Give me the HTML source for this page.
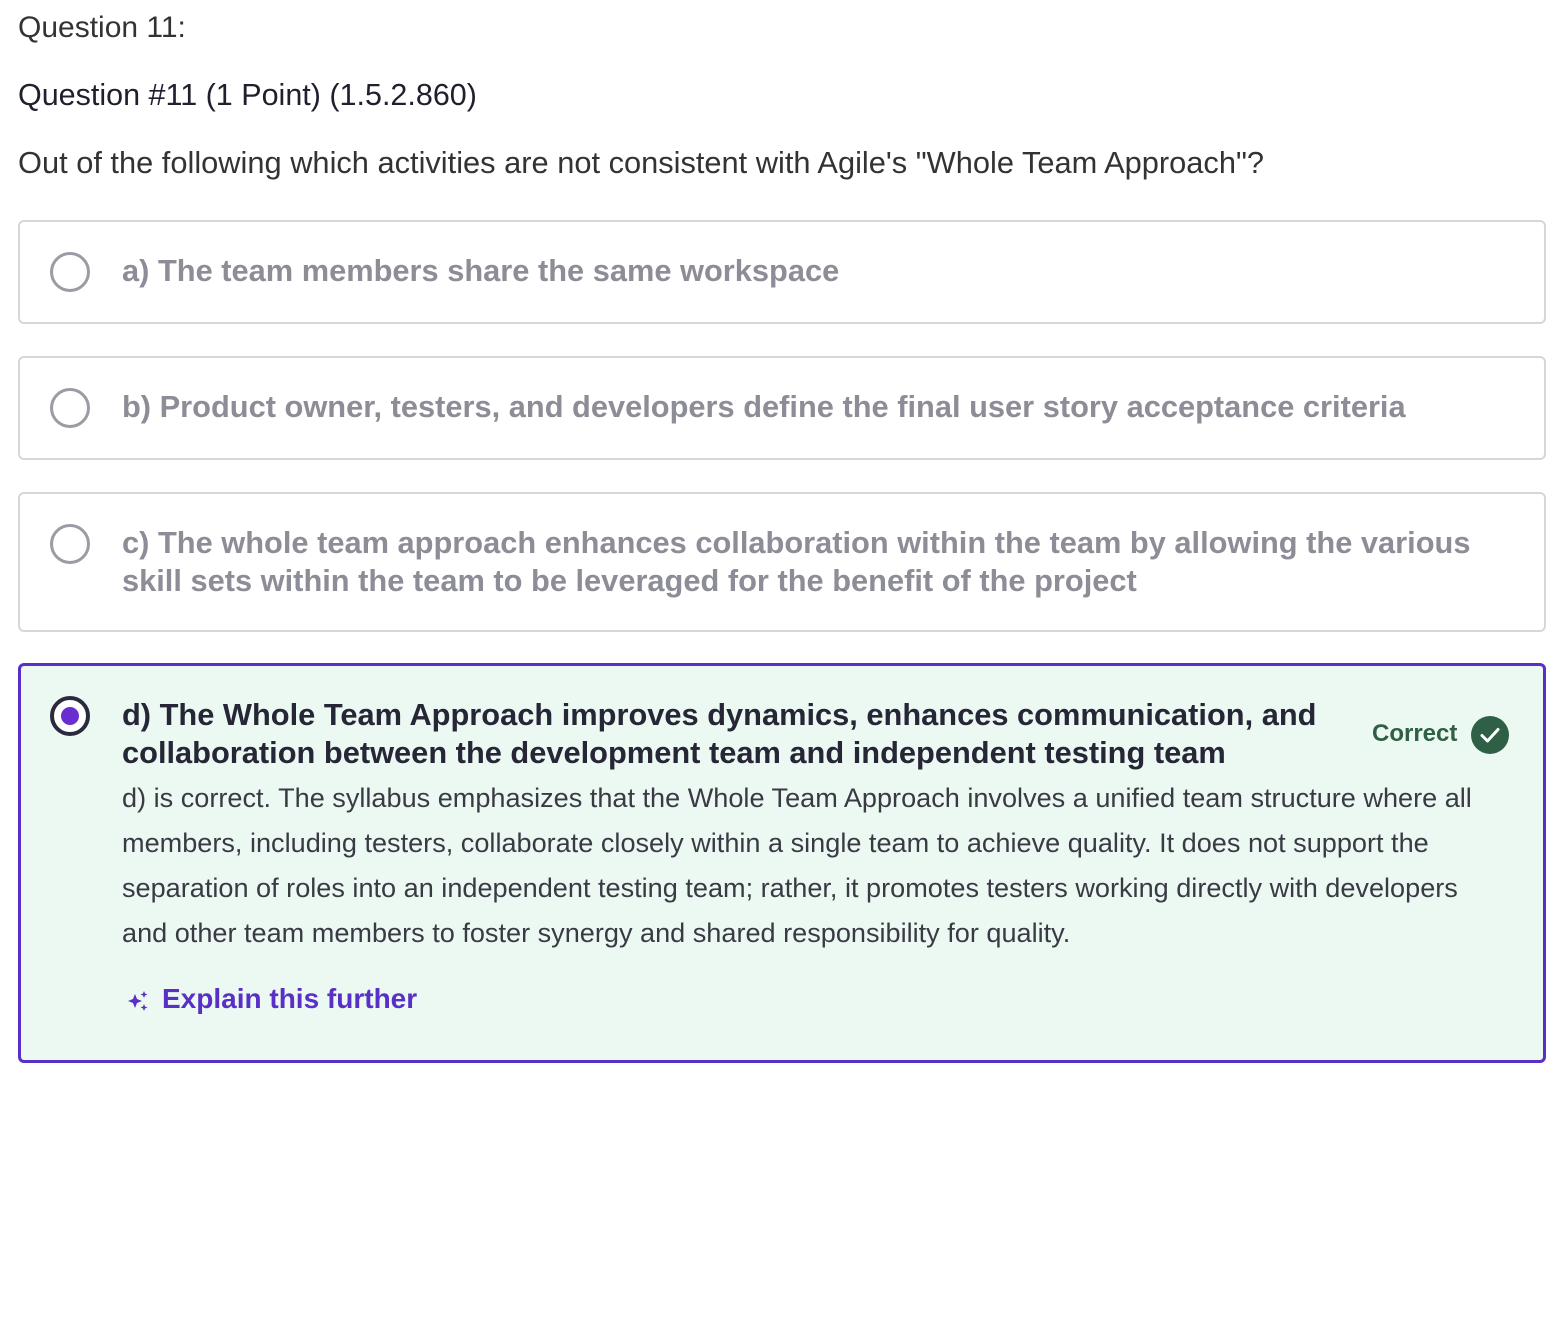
<!DOCTYPE html>
<html><head><meta charset="utf-8"><style>
body{margin:0;width:1566px;height:1336px;background:#fff;font-family:"Liberation Sans",sans-serif;color:#1f1f2e;position:relative;overflow:hidden}
.t{position:absolute;white-space:nowrap}
.box{position:absolute;left:18px;width:1528px;border:2px solid #d6d6dc;border-radius:6px;box-sizing:border-box}
.rad{position:absolute;left:50px;width:40px;height:40px;border:3px solid #9b9ba3;border-radius:50%;box-sizing:border-box}
.opt{position:absolute;left:122px;font-weight:bold;font-size:30.8px;color:#8d8d97;line-height:38px;white-space:nowrap}
</style></head><body>
<div class="t" style="left:18px;top:11px;font-size:30px;color:#333">Question 11:</div>
<div class="t" style="left:18px;top:78px;font-size:30.5px;color:#1f1f2e">Question #11 (1 Point) (1.5.2.860)</div>
<div class="t" style="left:18px;top:145px;font-size:30.8px;color:#333">Out of the following which activities are not consistent with Agile's "Whole Team Approach"?</div>

<div class="box" style="top:220px;height:104px"></div>
<div class="rad" style="top:252px"></div>
<div class="opt" style="top:252px">a) The team members share the same workspace</div>

<div class="box" style="top:356px;height:104px"></div>
<div class="rad" style="top:388px"></div>
<div class="opt" style="top:388px">b) Product owner, testers, and developers define the final user story acceptance criteria</div>

<div class="box" style="top:492px;height:140px"></div>
<div class="rad" style="top:524px"></div>
<div class="opt" style="top:524px">c) The whole team approach enhances collaboration within the team by allowing the various<br>skill sets within the team to be leveraged for the benefit of the project</div>

<div class="box" style="top:663px;height:400px;border:3px solid #5a2fc6;background:#ecf9f3"></div>
<div class="rad" style="top:696px;border:4px solid #2a2a3c;background:#fff"><div style="position:absolute;left:7px;top:7px;width:18px;height:18px;border-radius:50%;background:#6a2ed0"></div></div>
<div class="opt" style="top:696px;color:#262636">d) The Whole Team Approach improves dynamics, enhances communication, and<br>collaboration between the development team and independent testing team</div>
<div class="t" style="left:1372px;top:720px;font-weight:bold;font-size:24px;color:#2f5f45">Correct</div>
<svg style="position:absolute;left:1471px;top:716px" width="38" height="38" viewBox="0 0 38 38"><circle cx="19" cy="19" r="19" fill="#2f5f45"/><path d="M11 19.5l5.5 5.5L27 13.5" stroke="#fff" stroke-width="3" fill="none" stroke-linecap="round" stroke-linejoin="round"/></svg>
<div class="t" style="left:122px;top:775px;font-size:27.1px;line-height:45px;color:#3a3a44">d) is correct. The syllabus emphasizes that the Whole Team Approach involves a unified team structure where all<br>members, including testers, collaborate closely within a single team to achieve quality. It does not support the<br>separation of roles into an independent testing team; rather, it promotes testers working directly with developers<br>and other team members to foster synergy and shared responsibility for quality.</div>
<svg style="position:absolute;left:127px;top:990px" width="22" height="22" viewBox="0 0 22 22" fill="#5a2fc6"><path d="M8 4l2 5 5 2-5 2-2 5-2-5-5-2 5-2z"/><path d="M17 1l1 2.5 2.5 1-2.5 1-1 2.5-1-2.5-2.5-1 2.5-1z"/><path d="M17 14l1 2.5 2.5 1-2.5 1-1 2.5-1-2.5-2.5-1 2.5-1z"/></svg>
<div class="t" style="left:162px;top:983px;font-weight:bold;font-size:28px;color:#5a2fc6">Explain this further</div>
</body></html>
